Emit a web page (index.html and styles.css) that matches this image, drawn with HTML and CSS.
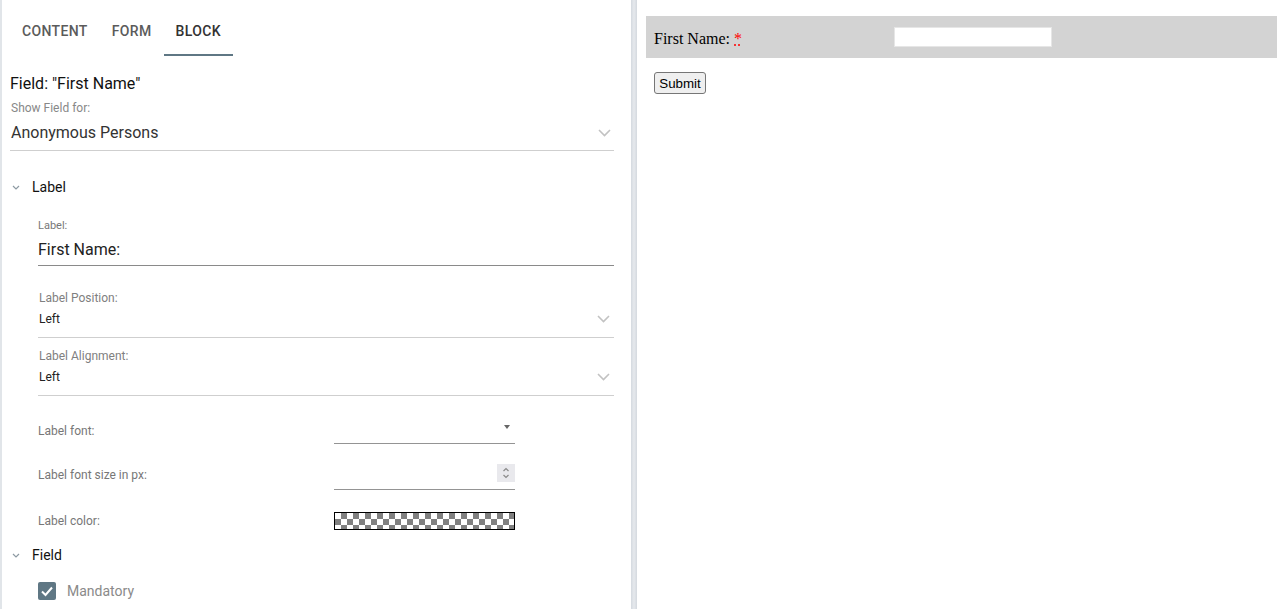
FILE: index.html
```html
<!DOCTYPE html>
<html lang="en">
<head>
    <meta charset="UTF-8">
    <title>Form block editor</title>
    <link rel="stylesheet" href="styles.css">
</head>
<body>
    <div class="app">
        <div class="editor">
            <nav class="tabs">
                <span class="tab">Content</span>
                <span class="tab">Form</span>
                <span class="tab active">Block</span>
            </nav>

            <div class="field-title">Field: "First Name"</div>
            <div class="small-label">Show Field for:</div>
            <div class="select big">
                <span>Anonymous Persons</span>
                <svg class="chev" width="13" height="8" viewBox="0 0 13 8"><polyline points="1,1 6.5,6.5 12,1" /></svg>
            </div>

            <div class="section-head">
                <svg class="sec-chev" width="8" height="5" viewBox="0 0 8 5"><polyline points="1,1 4,4 7,1" /></svg>
                <span>Label</span>
            </div>
            <div class="section-body">
                <div class="text-field">
                    <div class="tf-label">Label:</div>
                    <div class="tf-value">First Name:</div>
                </div>

                <div class="select-field">
                    <div class="sf-label">Label Position:</div>
                    <div class="sf-value">
                        <span>Left</span>
                        <svg class="chev" width="13" height="8" viewBox="0 0 13 8"><polyline points="1,1 6.5,6.5 12,1" /></svg>
                    </div>
                </div>

                <div class="select-field second">
                    <div class="sf-label">Label Alignment:</div>
                    <div class="sf-value">
                        <span>Left</span>
                        <svg class="chev" width="13" height="8" viewBox="0 0 13 8"><polyline points="1,1 6.5,6.5 12,1" /></svg>
                    </div>
                </div>

                <div class="prop-row font-row">
                    <span class="prop-label">Label font:</span>
                    <div class="prop-input dropdown"><span class="caret"></span></div>
                </div>

                <div class="prop-row size-row">
                    <span class="prop-label">Label font size in px:</span>
                    <div class="prop-input number">
                        <span class="spinner">
                            <svg width="18" height="18" viewBox="0 0 18 18"><polyline points="6.5,7 9,4.5 11.5,7" /><polyline points="6.5,11 9,13.5 11.5,11" /></svg>
                        </span>
                    </div>
                </div>

                <div class="prop-row color-row">
                    <span class="prop-label">Label color:</span>
                    <div class="checker"></div>
                </div>
            </div>

            <div class="section-head field-head">
                <svg class="sec-chev" width="8" height="5" viewBox="0 0 8 5"><polyline points="1,1 4,4 7,1" /></svg>
                <span>Field</span>
            </div>
            <div class="section-body">
                <label class="check">
                    <span class="box">
                        <svg width="18" height="18" viewBox="0 0 18 18"><polyline points="4,9.5 7.5,13 14,5.5" /></svg>
                    </span>
                    Mandatory
                </label>
            </div>
        </div>

        <div class="splitter"></div>

        <div class="preview">
            <div class="form-row">
                <div class="form-label">First Name: <abbr class="req" title="required">*</abbr></div>
                <input class="form-input" type="text">
            </div>
            <button class="submit">Submit</button>
        </div>
    </div>
</body>
</html>
```

FILE: styles.css
```css
body {
    margin: 0;
    background: #fff;
}
.app {
    display: flex;
    height: 609px;
    overflow: hidden;
}

/* left editor panel */
.editor {
    width: 631px;
    flex-shrink: 0;
    box-sizing: border-box;
    border-left: 2px solid #e1e5e9;
    padding: 0 17px 0 8px;
    font-family: Roboto, "Liberation Sans", sans-serif;
    color: #222;
}
.tabs {
    display: flex;
    margin-top: 8px;
}
.tab {
    padding: 0 12px;
    height: 46px;
    line-height: 46px;
    font-size: 14px;
    font-weight: 500;
    letter-spacing: 0.35px;
    text-transform: uppercase;
    color: #5b5b5b;
    border-bottom: 2px solid transparent;
}
.tab.active {
    color: #333;
    border-bottom-color: #5f7784;
}
.field-title {
    margin-top: 18px;
    font-size: 16px;
    line-height: 20px;
    color: #111;
}
.small-label {
    margin-top: 6px;
    padding-left: 1px;
    font-size: 12px;
    line-height: 16px;
    color: #888;
}
.select {
    display: flex;
    justify-content: space-between;
    align-items: center;
    padding: 5px 3px 5px 1px;
    border-bottom: 1px solid #cfcfcf;
}
.select.big {
    font-size: 16px;
    line-height: 24px;
    color: #333;
}
.chev polyline {
    fill: none;
    stroke: #c2c2c2;
    stroke-width: 1.6;
}

.section-head {
    display: flex;
    align-items: center;
    margin-top: 26px;
    font-size: 14px;
    line-height: 20px;
    color: #111;
}
.section-head.field-head {
    margin-top: 15px;
}
.sec-chev {
    margin: 0 12px 0 2px;
}
.sec-chev polyline {
    fill: none;
    stroke: #8d9aa3;
    stroke-width: 1.2;
}
.section-body {
    padding-left: 28px;
}

.text-field {
    margin-top: 22px;
}
.tf-label {
    font-size: 11px;
    line-height: 14px;
    color: #777;
}
.tf-value {
    margin-top: 5px;
    padding-bottom: 3px;
    font-size: 16px;
    line-height: 24px;
    color: #222;
    border-bottom: 1px solid #8a8a8a;
}

.select-field {
    margin-top: 24px;
}
.select-field.second {
    margin-top: 10px;
}
.sf-label {
    padding-left: 1px;
    font-size: 12px;
    line-height: 16px;
    color: #808080;
}
.sf-value {
    display: flex;
    justify-content: space-between;
    align-items: center;
    margin-top: 5px;
    padding: 0 4px 10px 1px;
    font-size: 12px;
    line-height: 16px;
    color: #222;
    border-bottom: 1px solid #cfcfcf;
}

.prop-row {
    display: flex;
    align-items: center;
}
.font-row { margin-top: 21px; }
.size-row { margin-top: 19px; }
.color-row { margin-top: 22px; }
.prop-label {
    width: 296px;
    font-size: 12px;
    line-height: 16px;
    color: #777;
}
.size-row .prop-label {
    padding-bottom: 4px;
}
.prop-input {
    display: flex;
    justify-content: flex-end;
    align-items: flex-start;
    width: 181px;
    height: 26px;
    border-bottom: 1px solid #949494;
}
.dropdown {
    padding: 8px 5px 0 0;
    box-sizing: border-box;
    height: 27px;
}
.caret {
    width: 0;
    height: 0;
    border-left: 3px solid transparent;
    border-right: 3px solid transparent;
    border-top: 4px solid #666;
}
.number {
    padding-top: 1px;
    box-sizing: border-box;
    height: 27px;
}
.spinner {
    display: block;
    width: 18px;
    height: 18px;
    background: #e9e9ed;
}
.spinner svg {
    display: block;
}
.spinner polyline {
    fill: none;
    stroke: #8a8a8a;
    stroke-width: 1.2;
}
.checker {
    width: 181px;
    height: 18px;
    box-sizing: border-box;
    border: 1px solid #000;
    background-color: #fff;
    background-image: conic-gradient(#808080 25%, #fff 0 50%, #808080 0 75%, #fff 0);
    background-size: 12px 12px;
    background-position: 0 0;
}

.check {
    display: flex;
    align-items: center;
    margin-top: 17px;
    font-size: 14px;
    line-height: 18px;
    color: #8a8a8a;
}
.box {
    width: 18px;
    height: 18px;
    margin-right: 11px;
    border-radius: 2px;
    background: #5f7784;
}
.box svg {
    display: block;
}
.box polyline {
    fill: none;
    stroke: #fff;
    stroke-width: 2;
}

/* splitter */
.splitter {
    width: 6px;
    flex-shrink: 0;
    background: linear-gradient(to right, #d4d9df, #e6e9ed 50%, #d4d9df);
}

/* right preview */
.preview {
    flex: 1;
    padding: 16px 1px 0 9px;
    font-family: "Liberation Serif", serif;
    font-size: 16px;
}
.form-row {
    display: flex;
    align-items: center;
    height: 42px;
    background: #d3d3d3;
}
.form-label {
    width: 248px;
    box-sizing: border-box;
    padding: 3px 0 0 8px;
    color: #000;
}
.req {
    color: red;
    text-decoration: underline dotted red;
}
.form-input {
    width: 158px;
    height: 20px;
    box-sizing: border-box;
    margin: 0;
    border: 1px solid #e6e6e6;
    background: #fff;
}
.submit {
    display: block;
    margin: 14px 0 0 8px;
    width: 52px;
    height: 22px;
    padding: 0;
    font-family: "Liberation Sans", Arial, sans-serif;
    font-size: 13.33px;
    color: #000;
    background: #efefef;
    border: 1px solid #767676;
    border-radius: 3px;
}
```
